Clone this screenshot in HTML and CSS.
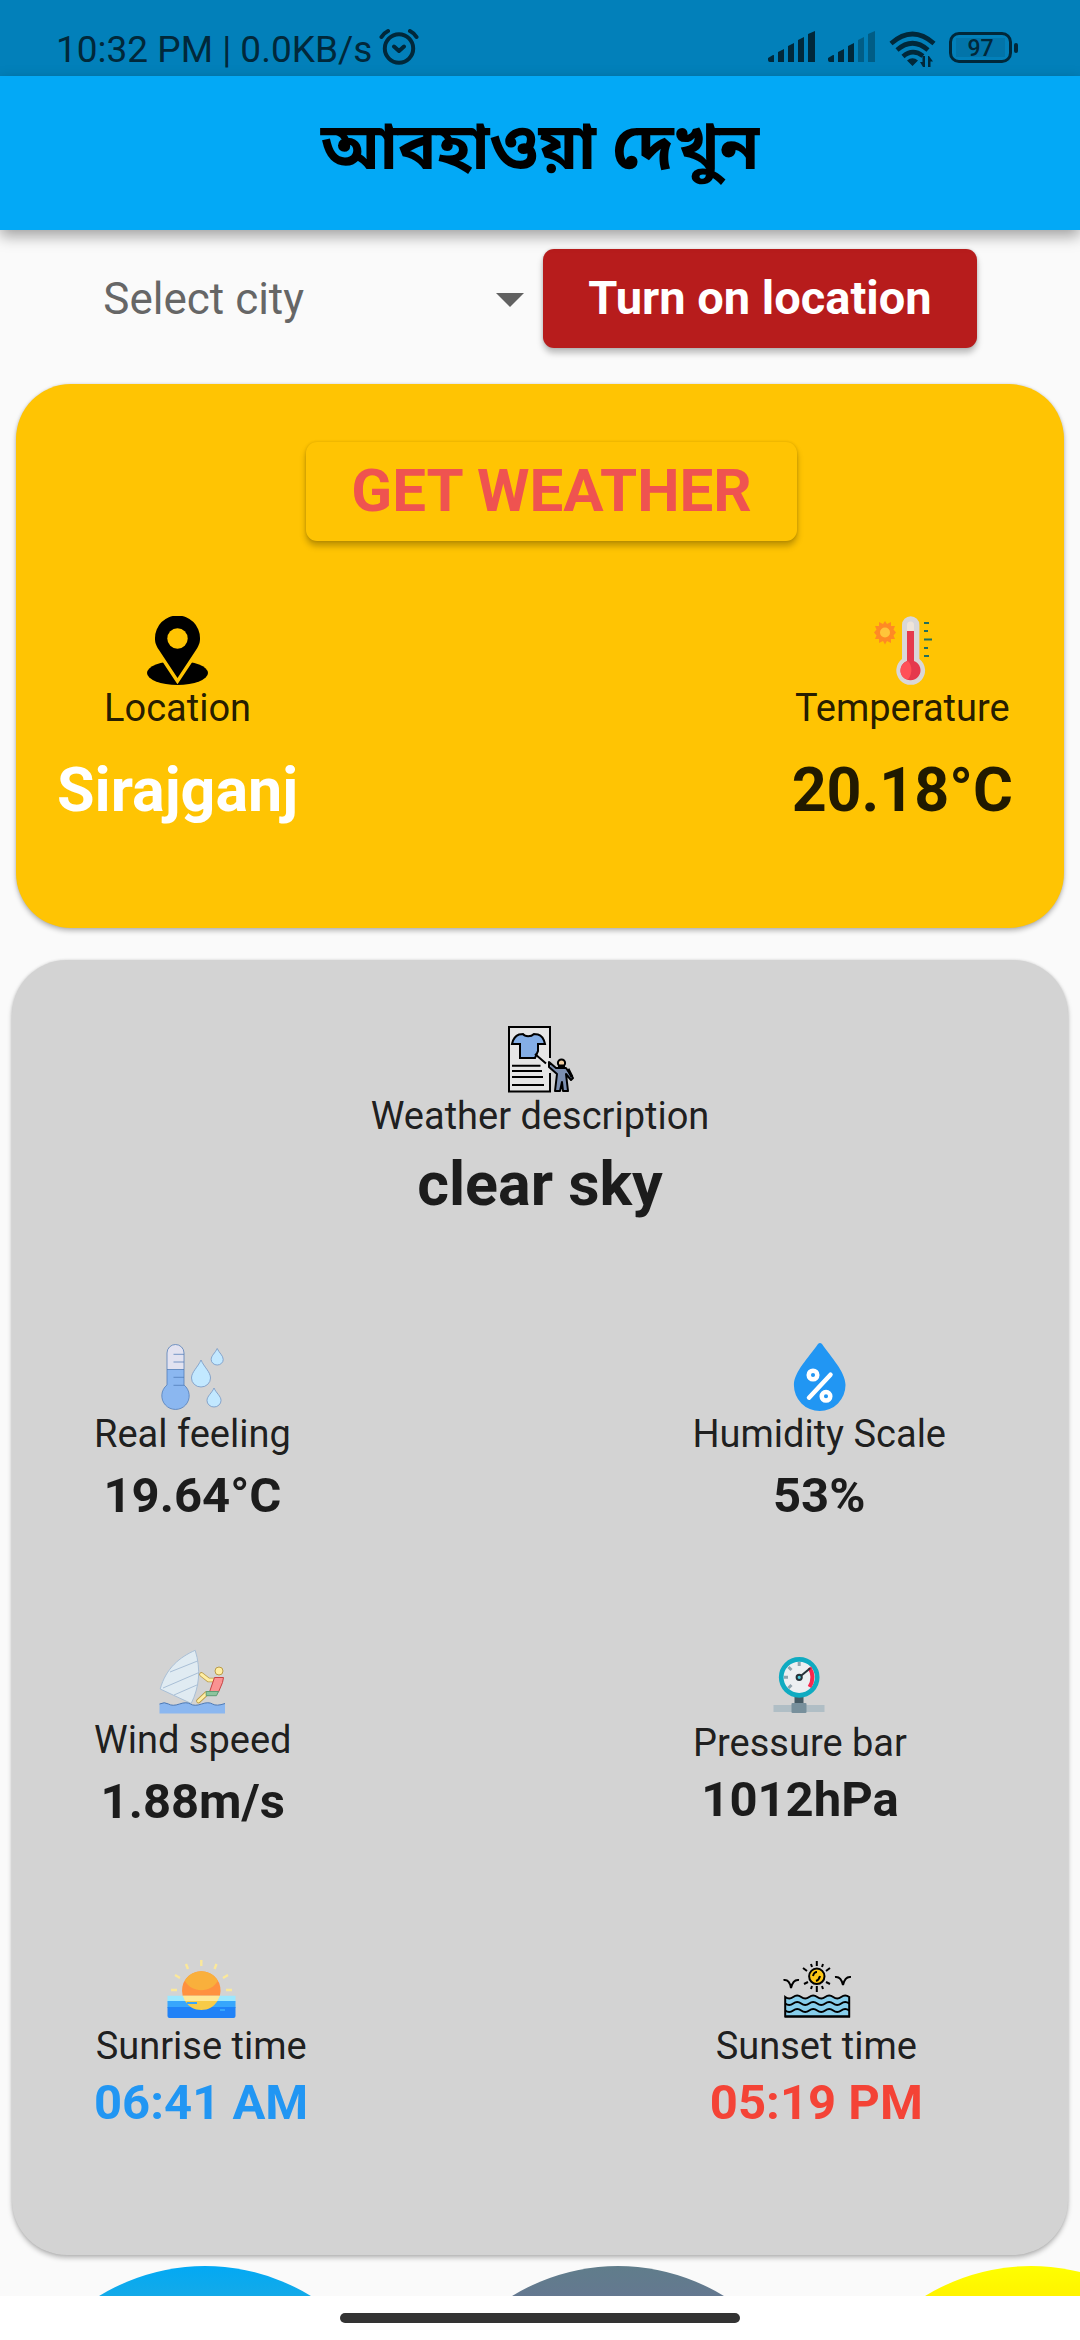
FILE: index.html
```html
<!DOCTYPE html>
<html lang="bn">
<head>
<meta charset="utf-8">
<meta name="viewport" content="width=device-width, initial-scale=1">
<title>আবহাওয়া দেখুন</title>
<link rel="stylesheet" href="styles.css">
</head>
<body>
<div class="app">
  <div class="status-bar" lang="en">
    <div class="status-left">
      <span>10:32 PM | 0.0KB/s</span>
      <svg class="alarm" width="40" height="38" viewBox="0 0 40 38" fill="none" stroke="currentColor" stroke-width="4" stroke-linecap="round" stroke-linejoin="round"><circle cx="20" cy="20.500" r="14.200"/><path d="M2.500 9C4 6.500 6 4.500 9 3M37.500 9C36 6.500 34 4.500 31 3M15 18.500l5 4.500 5-4.500"/></svg>
    </div>
    <div class="status-right">
      <svg width="50" height="32" viewBox="0 0 50 32" fill="currentColor"><path d="M1 27l5-3q1-.4 1 .6V31H3q-2 0-2-2zM11 21l6-3V31h-6zM21 15l6-3V31h-6zM31 9l6-3V31h-6zM41 3l7-3V31h-7z"/></svg>
      <svg class="sim-two" width="50" height="32" viewBox="0 0 50 32" fill="currentColor"><path d="M1 27l5-3q1-.4 1 .6V31H3q-2 0-2-2zM11 21l6-3V31h-6zM21 15l6-3V31h-6z"/><path opacity=".4" d="M31 9l6-3V31h-6zM41 3l7-3V31h-7z"/></svg>
      <svg class="wifi" width="48" height="36" viewBox="0 0 48 36"><g fill="none" stroke="currentColor" stroke-width="4.600"><path d="M2 12.500Q23.500-6.500 45 12.500M8 19Q23.500 5.500 39 19M14 25.500Q23.500 17 34 25"/></g><g fill="currentColor"><path d="M18 29.500q5.500-4.500 11 0L23.500 35zM36 25v11h-2l-3-5h2.500v-6zM39 36V25h1l4 5.500h-2.500V36z"/></g></svg>
      <div class="battery"><span>97</span></div>
    </div>
  </div>
  <header class="app-bar"><h1>আবহাওয়া দেখুন</h1></header>

  <main class="content" lang="en">
    <form class="picker">
      <div class="city">
        <select aria-label="City"><option>Select city</option><option>Sirajganj</option></select>
        <svg width="66" height="66" viewBox="0 0 66 66" fill="#616161"><path d="M19 27h28L33 41z"/></svg>
      </div>
      <button type="button" class="btn btn-location">Turn on location</button>
    </form>

    <section class="card card-now">
      <button type="button" class="btn btn-weather">GET WEATHER</button>
      <div class="now-row">
        <div class="metric metric-large">
          <svg class="icon" viewBox="0 0 69 69"><ellipse cx="34.500" cy="57" rx="30.500" ry="12"/><path stroke="#ffc403" stroke-width="7" d="M34.500 62L16 34C12 28 12 25 12 22a22.300 22.300 0 0 1 45 0c0 3 0 6-4 12z" /><path d="M34.500 62L16 34C12 28 12 25 12 22a22.300 22.300 0 0 1 45 0c0 3 0 6-4 12z"/><circle cx="34.500" cy="22.500" r="10.200" fill="#ffc403"/></svg>
          <span class="label">Location</span>
          <strong class="value white">Sirajganj</strong>
        </div>
        <div class="metric metric-large">
          <svg class="icon" viewBox="0 0 69 69"><path fill="#ff8a24" d="M17 5l2 3 4-2v4l4 0-1.500 3.500L28 16.500l-2.500 3L27 23h-4v4l-4-2-2 3.500-2-3.500-4 2v-4H7l1.500-3.500L6 16.500l2.500-3L7 10h4V6l4 2z"/><circle cx="17" cy="16.500" r="5" fill="#ffc53a"/><path fill="#d9d7d8" d="M34 9a8.700 8.700 0 0 1 17.400 0V43a14.400 14.400 0 1 1-17.400 0z"/><path fill="#efe4d8" d="M39 15V9a3.500 3.500 0 0 1 7 0v6z"/><path fill="#e5394d" d="M39 15h7v30a10 10 0 1 1-7 0z"/><path fill="#ff5058" d="M40 45c4 4 5 12 0 18.500C30 62 30 48 40 45z"/><path stroke="#23705d" stroke-width="2" d="M56 7h5M56 15h4M56 23.500h8M56 32h4M56 40h5"/></svg>
          <span class="label">Temperature</span>
          <strong class="value">20.18°C</strong>
        </div>
      </div>
    </section>

    <section class="card card-details">
      <div class="metric metric-summary">
        <svg class="icon" viewBox="0 0 69 69" stroke="#000" stroke-width="2"><path fill="#e6e6e6" d="M44 34V3H3v64.500h41V49"/><path fill="#84aee6" d="M6 20C7 15 9 12 13 10.500l4-.5c2 3 8 3 11 0l4 .5c4 1 6 5 7 9.500h-7v7l-3 7H14V20z"/><path d="M6 41.700h28.500M6 47h30M6 53h31M6 61h32M29 30l11 9.500" fill="none"/><g fill="#7c8fb0"><path d="M43 38l7 6h10l7 10-2 2-5-6 2 17h-5l-1-9-2 9h-5l2-17-8-7z" stroke-linejoin="round"/></g><circle cx="55.500" cy="39" r="3.600" fill="#f2cfa2"/><path d="M52 42h7M62 45l4 8" stroke-width="3"/></svg>
        <span class="label">Weather description</span>
        <strong class="value">clear sky</strong>
      </div>
      <div class="pair">
        <div class="metric">
          <svg class="icon" viewBox="0 0 69 69"><path fill="#e2e2f0" d="M9 28V11a8.500 8.500 0 0 1 17 0v17z"/><path fill="#8bb7f0" d="M9 27.500h17V43a13.700 13.700 0 1 1-17 0z"/><g fill="none" stroke="#4e7ab5" stroke-opacity=".75" stroke-width="1"><path d="M9 43V11a8.500 8.500 0 0 1 17 0v32a13.700 13.700 0 1 1-17 0zM15.500 12.300H26M15.500 20H26M9 27.500h17M15.500 35.300H26M15.500 43.300H26"/></g><path fill="#c2e8ff" stroke="#7496c4" stroke-opacity=".8" d="M43 18c3 7 9.500 12 9.500 18a9.500 9 0 0 1-19 0c0-6 6.500-11 9.500-18zM59.200 6.500c2 4.500 6 7 6 11a6 5.500 0 0 1-12 0c0-4 4-6.500 6-11zM56 46c2 5 7 8 7 12.500a7 6.500 0 0 1-14 0c0-4.500 5-7.500 7-12.500z"/></svg>
          <span class="label">Real feeling</span>
          <strong class="value">19.64°C</strong>
        </div>
        <div class="metric">
          <svg class="icon" viewBox="0 0 69 69"><path fill="#2196f3" d="M33 2q2-2 4 0C46 15 60.500 30 60.500 43a25.800 26 0 0 1-51.600 0C8.900 30 24 15 33 2z"/><g fill="none" stroke="#fff" stroke-width="4.500" stroke-linecap="round"><circle cx="28" cy="33" r="4.300"/><circle cx="41" cy="54.300" r="4.300"/><path d="M24 55.700l21.500-23"/></g></svg>
          <span class="label">Humidity Scale</span>
          <strong class="value">53%</strong>
        </div>
      </div>
      <div class="pair">
        <div class="metric">
          <svg class="icon" viewBox="0 0 69 69" stroke-width="1"><path fill="#e0ebf2" stroke="#a9bfd6" d="M37.200 2.300C22 9 8 20 2.200 41l31 14.500c8-16 10-34 4-53.200zM12 24l27.500-11M5 40l36-15.500M16 47l24-10.500"/><path fill="#8bb7f0" d="M1.500 56q5-2.500 9 0t11 0 11 0 11 0 11 0 12.500-.500v10H1.500z"/><path fill="none" stroke="#4e7ab5" d="M1.500 56q5-2.500 9 0t11 0 11 0 11 0 11 0 12.500-.500"/><g fill="none" stroke-linecap="round"><path stroke="#ba9b48" stroke-width="4.600" d="M43.500 26.500l7 5.500h6M48.500 45.500l-8 7.500"/><path stroke="#ffeea3" stroke-width="3" d="M43.500 26.500l7 5.500h6M48.500 45.500l-8 7.500"/></g><circle cx="61" cy="23" r="4" fill="#ffeea3" stroke="#ba9b48"/><path fill="#fa9292" stroke="#c74343" d="M56.500 29.500h9l-1 5-4 9.500h-9z"/><path fill="#8cc49d" stroke="#5e9c76" d="M48.200 43.500h12.300l-2 4.200H48.200z"/></svg>
          <span class="label">Wind speed</span>
          <strong class="value">1.88m/s</strong>
        </div>
        <div class="metric metric-tight">
          <svg class="icon" viewBox="0 0 69 69"><path fill="#b0bec5" d="M8.500 54h51v7h-51z"/><path fill="#455a64" d="M29.500 45h9v8h-9z"/><rect fill="#78909c" x="26.500" y="52" width="15" height="10" rx="1"/><circle cx="34.200" cy="26.300" r="18" fill="#eceff1" stroke="#0fabc1" stroke-width="4.700"/><g fill="none"><path stroke="#f8274e" stroke-width="4" d="M44.500 16.500q6 10 0 19.500"/><path stroke="#90a4ae" stroke-width="3" d="M34.200 11v4M23.500 16l3 3M19 26.300h4M23.500 37l3-3"/><path stroke="#263238" stroke-width="2" d="M34.200 26.300l11-9"/></g><circle cx="34.200" cy="26.300" r="2.600" fill="#4dd0e1" stroke="#263238" stroke-width="2"/></svg>
          <span class="label">Pressure bar</span>
          <strong class="value">1012hPa</strong>
        </div>
      </div>
      <div class="pair">
        <div class="metric metric-tight">
          <svg class="icon" viewBox="0 0 69 69"><path fill="#9be8ff" d="M.5 41.700h68V48H.5z"/><path fill="#37a6fc" d="M.5 47h68v7H.5z"/><path fill="#2082f7" d="M.5 53h68v9q0 2-2 2h-64q-2 0-2-2z"/><path fill="#ff913f" d="M15.700 41.700a19.300 19.300 0 1 1 37.200 0z"/><path fill="#f9b03c" d="M17.700 26.800a19.300 19.300 0 0 1 33.200 0 19.300 19.300 0 0 1-33.200 0z"/><path fill="#ffe795" d="M15.700 41.700h37.200L50.500 47H18z"/><path fill="#f8cb48" d="M18 47h32.500c-4 6-9 9-16.200 9S22 53 18 47z"/><path stroke="#37a6fc" stroke-width="2" d="M20 49h10M53 56h5"/><path stroke="#fbe89a" stroke-width="2.400" d="M34.300 6v6M19 10l2 5M49.500 10l-2 5M8 21l5 3M61 21l-5 3M4 36h6M59 36h6"/></svg>
          <span class="label">Sunrise time</span>
          <strong class="value blue">06:41 AM</strong>
        </div>
        <div class="metric metric-tight">
          <svg class="icon" viewBox="0 0 69 69" fill="none" stroke="#000" stroke-width="2"><circle cx="34.800" cy="22.300" r="7.700" fill="#ffc816" stroke-width="2"/><path d="M31 22q1-4 4-4M38 22q-1 4-4 5"/><path d="M34.800 7v5M34.800 32v6M21 14l4 3M48 14l-4 3M22 30l4-2M48 30l-4-2M29 10l1 3M41 10l-1 3M29 35l1-3M41 35l-1-3M1.500 26q6-1 7.500 8 2-9 8-8M53 23q6-1 8 8 2-9 8-8"/><path fill="#87ceeb" d="M3.200 43q4 3 8 0t8 0 8 0 8 0 8 0 8 0 8 0 8 0V62.500h-64z"/><path stroke-width="2" d="M3.200 49.500q4 3 8 0t8 0 8 0 8 0 8 0 8 0 8 0 8 0M3.200 56.500q4 3 8 0t8 0 8 0 8 0 8 0 8 0 8 0 8 0M3 62.500h65"/></svg>
          <span class="label">Sunset time</span>
          <strong class="value red">05:19 PM</strong>
        </div>
      </div>
    </section>

    <div class="forecast">
      <div class="bubble bubble-blue"></div>
      <div class="bubble bubble-slate"></div>
      <div class="bubble bubble-yellow"></div>
    </div>
  </main>
  <div class="nav-bar"><div class="nav-pill"></div></div>
</div>
</body>
</html>
```
FILE: styles.css
```css
* {
  box-sizing: border-box;
}

body {
  margin: 0;
  background: #fafafa;
  color: rgba(0, 0, 0, 0.87);
  font-family: Roboto, "Noto Sans", "Noto Sans Bengali", sans-serif;
}

svg {
  display: block;
}

.app {
  display: flex;
  flex-direction: column;
  height: 100vh;
}

/* System status bar */
.status-bar {
  flex: none;
  display: flex;
  justify-content: space-between;
  height: 76px;
  padding: 28px 62px 0 56px;
  background: #0280ba;
  color: #01283a;
}

.status-left,
.status-right {
  display: flex;
  align-items: flex-start;
}

.status-left {
  gap: 7px;
  font-size: 37px;
  line-height: 44px;
}

.status-right {
  gap: 10px;
  padding-top: 3px;
}

.wifi {
  margin-left: 2px;
}

.battery {
  position: relative;
  width: 63px;
  height: 31px;
  margin: 1px 6px 0 2px;
  border: 3px solid currentColor;
  border-radius: 10px;
  font-size: 23px;
  line-height: 27px;
  font-weight: 500;
  text-align: center;
}

.battery::after {
  content: "";
  position: absolute;
  top: 8px;
  right: -9px;
  width: 4px;
  height: 10px;
  border-radius: 2px;
  background: currentColor;
}

.battery span {
  display: block;
  height: 19px;
  margin: 3px 4px;
  line-height: 21px;
  background: #0274a9;
}

/* Title bar */
.app-bar {
  flex: none;
  position: relative;
  display: flex;
  align-items: center;
  justify-content: center;
  height: 154px;
  padding-bottom: 10px;
  background: #03a9f6;
  box-shadow: 0 6px 14px rgba(0, 0, 0, 0.36);
}

.app-bar h1 {
  margin: 0;
  color: #000;
  font-size: 64px;
  line-height: 80px;
  font-weight: 700;
}

.content {
  flex: 1;
  min-height: 0;
  overflow: hidden;
}

/* City picker */
.picker {
  display: flex;
  justify-content: center;
  margin: 19px 0 36px;
}

.city {
  display: grid;
  align-items: center;
  width: 440px;
}

.city select,
.city svg {
  grid-area: 1 / 1;
}

.city select {
  appearance: none;
  width: 100%;
  padding: 0;
  border: 0;
  background: none;
  color: #666;
  font: 400 44px/52px Roboto, sans-serif;
}

.city svg {
  justify-self: end;
  pointer-events: none;
}

.btn {
  height: 99px;
  padding: 0 45px 2px;
  border: 0;
  border-radius: 11px;
  font-family: Roboto, sans-serif;
  font-weight: 700;
  box-shadow: 0 5px 6px rgba(0, 0, 0, 0.25), 0 0 3px rgba(0, 0, 0, 0.15);
}

.btn-location {
  background: #b71c1c;
  color: #fff;
  font-size: 47px;
}

.btn-weather {
  margin-left: 23px;
  background: #ffc403;
  color: #ef5350;
  font-size: 60px;
}

/* Cards */
.card {
  display: flex;
  flex-direction: column;
  align-items: center;
  border-radius: 55px;
  box-shadow: 0 3px 5px rgba(0, 0, 0, 0.25), 0 0 3px rgba(0, 0, 0, 0.12);
}

.card-now {
  margin: 0 16px;
  padding: 58px 0 103px;
  background: #ffc403;
}

.now-row {
  display: flex;
  justify-content: space-between;
  align-self: stretch;
  margin-top: 75px;
  padding: 0 51px 0 41px;
}

.card-details {
  margin: 32px 12px 11px;
  padding: 64px 0 123px;
  background: #d3d3d3;
}

.pair {
  display: flex;
  align-items: center;
  align-self: stretch;
  gap: calc(37vw + 2px);
  margin-top: 123px;
  padding-left: 82px;
}

/* Readings */
.metric {
  display: flex;
  flex-direction: column;
  align-items: center;
}

.icon {
  width: 69px;
  height: 69px;
}

.label {
  font-size: 38px;
  line-height: 46px;
}

.value {
  margin-top: 10px;
  font-size: 49px;
  line-height: 58px;
  font-weight: 700;
}

.metric-tight .value {
  margin-top: 5px;
}

.metric-summary .value,
.metric-large .value {
  font-size: 61px;
  line-height: 70px;
}

.metric-large .value {
  margin-top: 24px;
}

.white {
  color: #fff;
}

.blue {
  color: #2196f3;
}

.red {
  color: #f44336;
}

/* Forecast strip */
.forecast {
  display: flex;
  gap: 9px;
  padding-left: 3px;
}

.bubble {
  flex: none;
  width: 404px;
  height: 404px;
  border-radius: 50%;
}

.bubble-blue {
  background: linear-gradient(#03a9f4, #14aae8 31px);
}

.bubble-slate {
  background: linear-gradient(#607d8b, #647890 31px);
}

.bubble-yellow {
  background: linear-gradient(#ffff00, #fff300 31px);
}

/* System gesture bar */
.nav-bar {
  flex: none;
  display: flex;
  justify-content: center;
  height: 44px;
  padding-top: 17px;
  background: #fff;
}

.nav-pill {
  width: 37%;
  height: 10px;
  border-radius: 5px;
  background: #333;
}
```
